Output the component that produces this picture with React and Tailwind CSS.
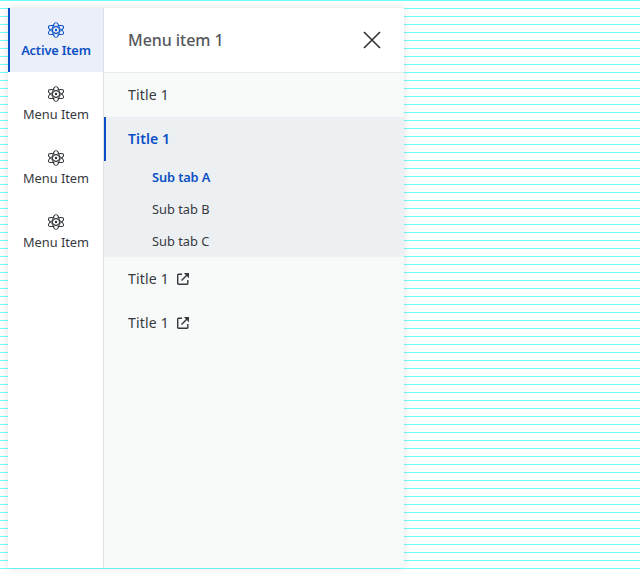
import React from "react";

const AtomIcon = ({ className }) => (
  <svg className={className} width="16" height="16" viewBox="0 0 16 16" fill="none" stroke="currentColor" strokeWidth="0.9">
    <g transform="translate(8 8) scale(1.15 1) translate(-8 -8)">
      <ellipse cx="8" cy="8" rx="3" ry="7.4" />
      <ellipse cx="8" cy="8" rx="3" ry="7.4" transform="rotate(60 8 8)" />
      <ellipse cx="8" cy="8" rx="3" ry="7.4" transform="rotate(120 8 8)" />
    </g>
    <circle cx="8" cy="8" r="1.2" fill="currentColor" stroke="none" />
  </svg>
);

const ExternalIcon = () => (
  <svg width="12" height="12" viewBox="0 0 12 12" fill="none" stroke="currentColor" strokeWidth="1.4">
    <path d="M5 1.2H1.6a.9.9 0 0 0-.9.9v8.3a.9.9 0 0 0 .9.9h8.3a.9.9 0 0 0 .9-.9V7" />
    <path d="M4.5 7.5 10.5 1.5" />
    <path d="M6.8 0h5.2v5.2z" fill="currentColor" stroke="none" />
  </svg>
);

const RailItem = ({ active, label }) => (
  <div
    className={`h-16 flex flex-col items-center justify-center gap-[3px] border-l-2 pr-px text-[12.8px] leading-[18px] ${
      active ? "bg-[#ebeff9] border-[#0b4fc4] text-[#0b4fc4] font-semibold tracking-[-0.15px]" : "border-transparent text-[#36393e]"
    }`}
  >
    <AtomIcon className={active ? "" : "text-[#33363a]"} />
    <span>{label}</span>
  </div>
);

const TitleRow = ({ external }) => (
  <div className="h-11 flex items-center gap-2 pl-6 text-sm tracking-[0.2px] text-[#36393e]">
    <span>Title 1</span>
    {external && <ExternalIcon />}
  </div>
);

const App = () => {
  return (
    <div className="h-[576px] pt-2 pl-2 font-['Noto_Sans',sans-serif] bg-white bg-[linear-gradient(to_bottom,#70ffff_0,#70ffff_1px,#ffffff_1px,#ffffff_8px)] bg-[size:100%_8px]">
      <div className="w-[396px] h-[560px] flex bg-white shadow-[0_0_8px_rgba(0,0,0,0.12)]">
        {/* Rail */}
        <div className="w-24 shrink-0 bg-white border-r border-[#dfe2e5]">
          <RailItem active label="Active Item" />
          <RailItem label="Menu Item" />
          <RailItem label="Menu Item" />
          <RailItem label="Menu Item" />
        </div>

        {/* Panel */}
        <div className="flex-1 bg-[#f8f9f9]">
          <div className="h-[65px] bg-white border-b border-[#e8eaec] flex items-center justify-between pl-6 pr-[23px]">
            <span className="text-base font-medium tracking-[-0.05px] text-[#55585c]">Menu item 1</span>
            <svg width="18" height="18" viewBox="0 0 18 18" fill="none" stroke="#2f3236" strokeWidth="1.6">
              <path d="M1 1l16 16M17 1L1 17" />
            </svg>
          </div>

          <TitleRow />

          <div className="bg-[#edf0f3]">
            <div className="h-11 flex items-center pl-[22px] border-l-2 border-[#0b4fc4] text-sm font-semibold tracking-[0.1px] text-[#0b4fc4]">
              Title 1
            </div>
            <div className="h-8 flex items-center pl-12 pt-px text-[12.8px] font-semibold tracking-[-0.1px] text-[#0b4fc4]">Sub tab A</div>
            <div className="h-8 flex items-center pl-12 pt-px text-[12.8px] text-[#36393e]">Sub tab B</div>
            <div className="h-8 flex items-center pl-12 pt-px text-[12.8px] text-[#36393e]">Sub tab C</div>
          </div>

          <TitleRow external />
          <TitleRow external />
        </div>
      </div>
    </div>
  );
};

export default App;
